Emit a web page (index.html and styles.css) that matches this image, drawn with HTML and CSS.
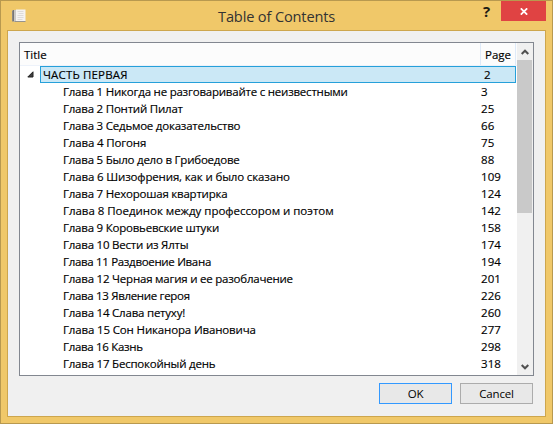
FILE: index.html
```html
<!DOCTYPE html>
<html lang="ru">
<head>
<meta charset="utf-8">
<title>Table of Contents</title>
<link rel="stylesheet" href="styles.css">
</head>
<body>
<div class="window">
  <header class="titlebar">
    <svg class="book" width="14" height="14" viewBox="0 0 14 14"><path d="M0 1.500h2v11H0z" fill="#8b8986"/><path d="M2 1h3v12H2z" fill="#c9c7c4"/><path d="M4 .5h9.500v11.500H4z" fill="#f5f3f1"/><path d="M3 12h10.500v1H2z" fill="#96938e"/><path d="M5.500 2.500h6m-5 2h5m-6 2h6m-6 2h6m-6 2h5" stroke="#dddbd9"/><path d="M1.500 1v11" stroke="#777572"/></svg>
    <h1 class="caption">Table of Contents</h1>
    <span class="help">?</span>
    <span class="close"><svg width="8" height="7" viewBox="0 0 8 7"><path d="M.8 .3 7.200 6.700M7.200 .3 .8 6.700" stroke="#fff" stroke-width="1.700"/></svg></span>
  </header>
  <main class="client">
    <div class="list">
      <div class="table">
        <div class="head"><span class="head-title">Title</span><span class="head-page">Page</span></div>
        <div class="rows">
          <div class="part"><svg class="arrow" width="7" height="7" viewBox="0 0 7 7"><path d="M6 .8V6H.8z" fill="#404040" stroke="#222"/></svg><div class="selected"><span>ЧАСТЬ ПЕРВАЯ</span><span class="page">2</span></div></div>
          <div class="row"><span class="snug">Глава 1 Никогда не разговаривайте с неизвестными</span><span class="page">3</span></div>
          <div class="row"><span class="snug">Глава 2 Понтий Пилат</span><span class="page">25</span></div>
          <div class="row"><span class="snug">Глава 3 Седьмое доказательство</span><span class="page">66</span></div>
          <div class="row"><span>Глава 4 Погоня</span><span class="page">75</span></div>
          <div class="row"><span class="snug">Глава 5 Было дело в Грибоедове</span><span class="page">88</span></div>
          <div class="row"><span>Глава 6 Шизофрения, как и было сказано</span><span class="page">109</span></div>
          <div class="row"><span class="snug">Глава 7 Нехорошая квартирка</span><span class="page">124</span></div>
          <div class="row"><span class="loose">Глава 8 Поединок между профессором и поэтом</span><span class="page">142</span></div>
          <div class="row"><span class="snug">Глава 9 Коровьевские штуки</span><span class="page">158</span></div>
          <div class="row"><span class="snug">Глава 10 Вести из Ялты</span><span class="page">174</span></div>
          <div class="row"><span class="tight">Глава 11 Раздвоение Ивана</span><span class="page">194</span></div>
          <div class="row"><span class="snug">Глава 12 Черная магия и ее разоблачение</span><span class="page">201</span></div>
          <div class="row"><span class="tight">Глава 13 Явление героя</span><span class="page">226</span></div>
          <div class="row"><span class="snug">Глава 14 Слава петуху!</span><span class="page">260</span></div>
          <div class="row"><span>Глава 15 Сон Никанора Ивановича</span><span class="page">277</span></div>
          <div class="row"><span class="tight">Глава 16 Казнь</span><span class="page">298</span></div>
          <div class="row"><span class="snug">Глава 17 Беспокойный день</span><span class="page">318</span></div>
        </div>
      </div>
      <div class="scrollbar">
        <span class="step"><svg width="8" height="6" viewBox="0 0 8 6"><path d="M.7 5 4 1.700 7.300 5" fill="none" stroke="#505050" stroke-width="2"/></svg></span>
        <span class="thumb"></span>
        <span class="step"><svg width="8" height="6" viewBox="0 0 8 6"><path d="M.7 1 4 4.300 7.300 1" fill="none" stroke="#505050" stroke-width="2"/></svg></span>
      </div>
    </div>
    <div class="actions"><button class="button primary">OK</button><button class="button">Cancel</button></div>
  </main>
</div>
</body>
</html>
```
FILE: styles.css
```css
* { box-sizing: border-box; }
body { margin: 0; font: 11.5px/17px "Open Sans", "Noto Sans", sans-serif; color: #000; }
svg { display: block; }
.window { width: 553px; height: 424px; background: #f0c869; border: 1px solid #b8994f; padding: 0 6px; }
.titlebar { display: flex; height: 29px; }
.book { margin: 8px 0 0 5px; flex: none; }
.caption { flex: 1; margin: 5px 0 0 192px; font-size: 14.6px; line-height: 20px; font-weight: 400; color: #333; letter-spacing: -0.15px; white-space: nowrap; }
.help { width: 9px; margin: 0 9px 0 0; font-size: 15px; line-height: 21px; font-weight: 700; color: #1e1b14; }
.close { width: 45px; height: 20px; background: #e04343; display: flex; align-items: center; justify-content: center; }
.client { height: 387px; border: 1px solid #cda64d; background: #f0f0f0; padding: 11px; }
.list { display: flex; width: 515px; height: 334px; border: 1px solid #828790; background: #fff; }
.table { width: 497px; -webkit-text-stroke: 0.15px #000; }
.head { display: flex; height: 23px; padding-right: 1px; line-height: 23px; background: #fcfcfc; border-bottom: 1px solid #edf2fa; }
.head-title { flex: 1; padding-left: 4px; border-right: 1px solid #dfeaf8; }
.head-page { width: 35px; padding-left: 4px; border-right: 1px solid #dfeaf8; }
.part { display: flex; height: 17px; }
.arrow { margin: 5px 6px 0 7px; width: 7px; flex: none; }
.selected { display: flex; justify-content: space-between; width: 476px; padding-left: 2px; line-height: 15px; background: #cbe8f6; border: 1px solid #26a0da; letter-spacing: 0.15px; }
.page { width: 32px; }
.selected .page { width: 31px; }
.row { display: flex; justify-content: space-between; height: 17px; padding: 0 4px 0 43px; white-space: nowrap; letter-spacing: -0.15px; }
.row .page { letter-spacing: 0.1px; }
.loose { letter-spacing: -0.03px; }
.snug { letter-spacing: -0.22px; }
.tight { letter-spacing: -0.32px; }
.scrollbar { width: 16px; background: #f0f0f0; display: flex; flex-direction: column; }
.step { height: 17px; display: flex; align-items: center; justify-content: center; }
.thumb { height: 153px; width: 15px; background: #c9c9c9; margin-bottom: auto; }
.actions { display: flex; justify-content: flex-end; gap: 8px; padding: 7px 1px 0 0; }
.button { width: 73px; height: 21px; padding: 0; font: inherit; font-size: 11.5px; background: #e8e8e8; border: 1px solid #acacac; color: #000; letter-spacing: -0.2px; }
.primary { border-color: #3399ff; }
```
